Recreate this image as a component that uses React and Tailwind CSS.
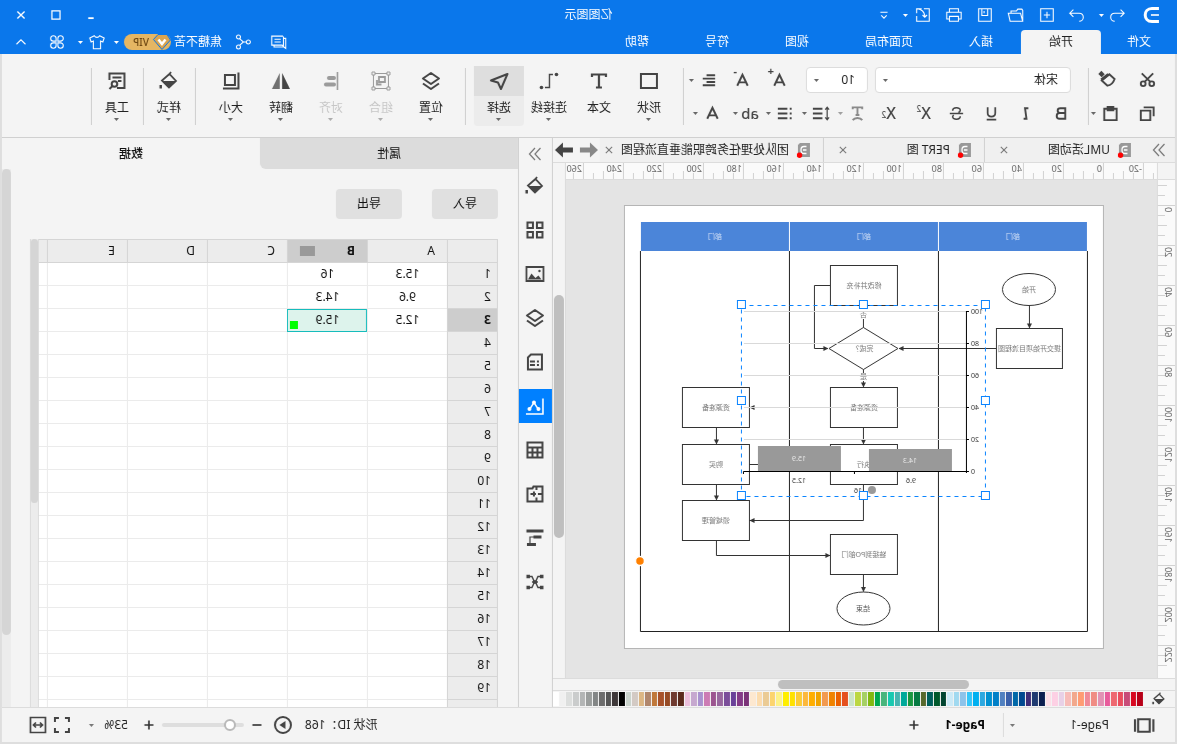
import React, { useState } from "react";
import clsx from "clsx";

const menuTabs = ["文件", "开始", "插入", "页面布局", "视图", "符号", "帮助"];

const palette = [
  "#b80018", "#d80820", "#c84c78", "#e94e5e", "#ee6870", "#e85c9c", "#e292b4", "#f08c84", "#f08a98", "#ff9c74",
  "#f2a88c", "#f7bcb8", "#e8d0e6", "#fdd0e4", "#fddfe8", "#0c1f50", "#1f3a70", "#3e2c78", "#004890", "#0068a8",
  "#3a60aa", "#5080c0", "#0080c8", "#0090d0", "#2ca8e0", "#00b0f0", "#34c6f9", "#8cc3ea", "#a0d9f0", "#cceaf7",
  "#004430", "#00582c", "#005f5c", "#57682c", "#067a42", "#1a9840", "#00a99a", "#45b5b0", "#18c9b0", "#48b57c",
  "#00a850", "#82b811", "#a5d064", "#bcd742", "#cce5c8", "#e5501e", "#eb6100", "#f08300", "#f29a50", "#f0a400",
  "#ffae00", "#fcb83c", "#fccc34", "#ffe100", "#ffee00", "#fdf288", "#fcd46e", "#ebcb94", "#fcdcae", "#fde8d0",
  "#7a3278", "#843b88", "#6a4199", "#7b4e9a", "#99689f", "#9c5590", "#cc7bb4", "#a992cf", "#c6a8cf", "#ecc0dc",
  "#5a2a1c", "#6f3a2f", "#964a24", "#a8522a", "#c0783a", "#b0866c", "#dcb684", "#d3cac4", "#c9d2cb", "#000000",
  "#3d3738", "#555555", "#6c6c6c", "#838686", "#9b9e9d", "#b3b5b5", "#cacccc", "#dcdedd", "#f0f0f0", "#ffffff",
];

const cells = {
  1: ["15.3", "16"],
  2: ["9.6", "14.3"],
  3: ["12.5", "15.9"],
};

// All icons share a 20x20 box and are stroked with the current colour
const icons = {
  undo: <path d="M6 4 2 8l4 4M2.500 8h10c3 0 4.500 2 4.500 4.500 0 2.500-2 4.500-4.500 4.500" />,
  redo: <path d="M14 4l4 4-4 4M17.500 8h-10C4.500 8 3 10 3 12.500 3 15 5 17 7.500 17" />,
  add: <path d="M3 3h14v14H3zM10 6.500v7M6.500 10h7" />,
  open: <path d="M2.500 16.500V5l1-1.500h4.500l1.500 2h6V8M2.500 17 5 8h13.500l-2 9z" />,
  save: <path d="M3 3h14v14H3zM7 3v7.500h6.500V3M11 5.500V8" />,
  print: <path d="M5 7V3h10v4M5 14.500H2V7h16v7.500h-3M5 11.500h10V17H5z" />,
  send: <path d="M9 3H3v14h14v-6M11.500 3H17v5M17 3c-6 .500-9 4-9 9.500M5.500 10 8 12.500l2.500-2.500" />,
  more: <path d="M6 7h8M7 10.500l3 3 3-3" />,
  chat: <path d="M5.500 3.500H18v10H6.500L5 15V4M5.500 6H2.500v11l2-1.500h11v-2M8 7h7M8 10h7" />,
  share: <><circle cx="4" cy="10" r="2.200" /><circle cx="15" cy="4.500" r="2.200" /><circle cx="15" cy="15.500" r="2.200" /><path d="M6 10h3.500M13.500 6.500 9.500 10l4 3.500" /></>,
  shirt: <path d="M7 3 2 5.500 3.500 10l2.500-1v8.500h8V9l2.500 1L18 5.500 13 3c-1.500 2.500-4.500 2.500-6 0z" />,
  clover: <path d="M9 9H6A3 3 0 1 1 9 6zM11 9h3A3 3 0 1 0 11 6zM9 11H6A3 3 0 1 0 9 14zM11 11h3a3 3 0 1 1-3 3z" />,
  up: <path d="M5 12.500l5-5 5 5" />,
  min: <path d="M7 13.500h6" strokeWidth="2" />,
  max: <path d="M5.500 5.500h9v9h-9z" strokeWidth="1.400" />,
  close: <path d="M6 6l8 8M14 6l-8 8" strokeWidth="1.500" />,
  tabClose: <path d="M6.500 6.500l7 7M13.500 6.500l-7 7" strokeWidth="1.200" />,
  cut: <><circle cx="5.500" cy="14.500" r="2.500" /><circle cx="14.500" cy="14.500" r="2.500" /><path d="M4 3.500l9 9M16 3.500l-9 9" /></>,
  copy: <path d="M7 7h10v10H7zM3.500 13V3.500H14" />,
  brush: <><path d="M18 2.500 14.500 6" strokeWidth="4.500" /><path d="M8 4.500l8 6.500-6 5.500c-3.500-.500-6-2.500-7.500-7z" /><path d="M9 4.500l7.500 6" strokeWidth="3" /></>,
  paste: <><path d="M7 5H3.500v12h13V5H13" /><path d="M7 3h6v3.500H7z" fill="currentColor" /></>,
  bold: <path d="M6 4.500h5c4 0 4 5 0 5H6zM6 9.500h6c4 0 4 6 0 6H6z" />,
  italic: <path d="M8 4.500h3.500l-1.500 11H13" />,
  underline: <path d="M6 3.500v6c0 5 8 5 8 0v-6M5 16.500h10" strokeWidth="1.800" />,
  strike: <path d="M14 7c0-4-8-4-8-.500 0 1.500 1 2 2 2.500M3 10h14M6 13c0 4 8 4 8 .500 0-1-.500-1.500-1-2" strokeWidth="1.600" />,
  textArc: <path d="M5 5.500v-2h10v2M10 3.500v8M8 11.500h4M5 17c2-3 8-3 10 0" />,
  spacing: <><path d="M9 5h10M9 10h10M9 15h10" strokeWidth="2" /><path d="M4 4v12M2 6l2-2.500L6 6M2 14l2 2.500L6 14" strokeWidth="1.300" /></>,
  bullets: <path d="M8 5h10M8 10h10M8 15h10M3.500 5h2M3.500 10h2M3.500 15h2" />,
  align: <path d="M3 4.500h9M3 8h13M3 11.500h9M3 15h13" />,
  fontColor: <path d="M4.500 15.500 10 4l5.500 11.500M6.500 12h7" />,
  rect: <path d="M2 3h16v14H2z" />,
  text: <path d="M3 6V3.500h14V6M10 3.500v13M7 16.500h6" strokeWidth="2.200" />,
  connector: <><circle cx="2.500" cy="3.500" r="1.800" fill="currentColor" stroke="none" /><circle cx="17.500" cy="16.500" r="1.800" fill="currentColor" stroke="none" /><path d="M6 3.500h3.500v13H14" strokeWidth="1.400" /></>,
  select: <path d="M1.500 3 18 9.500l-7 2L8 18z" strokeLinejoin="round" />,
  layers: <path d="M10 2l8 5.500-8 5.500-8-5.500zM2 12.500l8 5.500 8-5.500" strokeLinejoin="round" />,
  group: <><path d="M2.500 2.500h15v15h-15z" strokeWidth="1" /><path d="M6 6h6v5H6zM9.500 13.500H14V9" strokeWidth="1.800" /><path d="M1 1h3v3H1zM16 1h3v3h-3zM1 16h3v3H1zM16 16h3v3h-3z" fill="#f4f4f4" strokeWidth="1" /></>,
  alignTo: <><path d="M3.500 1v18" strokeWidth="1.600" /><path d="M7 7h5M7 13.500h8" strokeWidth="4" strokeLinecap="round" /></>,
  flip: <><path d="M8.800 2v16H1z" fill="currentColor" stroke="none" /><path d="M11.200 2v16H19z" fill="currentColor" stroke="none" opacity=".75" /></>,
  size: <path d="M6 4h10v10H6zM2.500 1.500v16H18" />,
  bucket: <><path d="M9.500 3 17 9.500l-7 7L3 10zM10 4 8 1" strokeWidth="1.800" /><path d="M3 10h14l-7 7z" fill="currentColor" stroke="none" /><path d="M17 14h2.500v3.500H17z" fill="currentColor" stroke="none" /></>,
  tool: <><path d="M10 17H2.500V2.500h15V9M5.500 6.500h9M5.500 10H9" /><circle cx="12.500" cy="13" r="2.800" /><path d="M14.500 15l3 3" /></>,
  chevrons: <path d="M4.500 4l5.500 6-5.500 6M10 4l5.500 6-5.500 6" strokeWidth="1.200" />,
  grid: <path d="M2.500 2.500h5.500v5.500H2.500zM12 2.500h5.500v5.500H12zM2.500 12h5.500v5.500H2.500zM12 12h5.500v5.500H12z" />,
  image: <><path d="M1.500 3h17v14h-17z" strokeWidth="1.800" /><path d="M3.500 15.500l3-4 3 2.500 4-4.500 3.500 6z" fill="currentColor" stroke="none" /><circle cx="5.500" cy="7" r="1.200" fill="currentColor" stroke="none" /></>,
  page: <path d="M3 2.500h11l3 3v12H3zM6 9.500h2M10 9.500h5M6 13h2M10 13h5" />,
  chart: <><path d="M2 2.500V18h17" strokeWidth="1.600" /><path d="M6.500 13.500 11 6.500l4.500 7" strokeWidth="1.400" /><circle cx="6.500" cy="13" r="2" fill="currentColor" stroke="none" /><circle cx="11" cy="6.500" r="2" fill="currentColor" stroke="none" /><circle cx="15.500" cy="13" r="2" fill="currentColor" stroke="none" /></>,
  table: <path d="M2.500 2.500h15v15h-15zM2.500 7.500h15M2.500 12.500h15M7.500 7.500v10M12.500 7.500v10" />,
  plan: <path d="M2.500 2.500h9l1 2h5v13h-15zM2.500 10H7M8.500 2.500V6M8.500 13.500v4M11 7.500v5M9 10h5.500" />,
  gantt: <><path d="M1.500 3h17" strokeWidth="3" /><path d="M3.500 9h8M9 16.500h9" strokeWidth="3" /><path d="M11 9h4v7" strokeWidth="1.200" /></>,
  mind: <><path d="M4 4.500h3l2.500 5.500L7 15.500H4M16 4.500h-3L10.500 10l2.500 5.500h3M7 10h6" strokeWidth="1.400" /><path d="M1.500 4.500H5M1.500 15.500H5M15 4.500h3.500M15 15.500h3.500M8 10h4" strokeWidth="3.600" /></>,
  book: <path d="M5 4h11v12H5zM1.500 4v12M19 4v12" strokeWidth="2" />,
  plus: <path d="M10 5v10M5 10h10" strokeWidth="1.800" />,
  minus: <path d="M5 10h10" strokeWidth="1.800" />,
  play: <><circle cx="10" cy="10" r="8" /><path d="M7.500 6l6 4-6 4z" fill="currentColor" stroke="none" /></>,
  full: <path d="M7 3H3v4M13 3h4v4M7 17H3v-4M13 17h4v-4" />,
  fit: <path d="M2.500 2.500h15v15h-15zM6 10h8M8 7.500 5.500 10 8 12.500M12 7.500l2.500 2.500-2.500 2.500" strokeWidth="1.700" />,
};

function Icon({ name, size = 18, width = 2, className = "" }) {
  return (
    <svg width={size} height={size} viewBox="0 0 20 20" fill="none" stroke="currentColor" strokeWidth={width} className={clsx("shrink-0", className)} aria-hidden="true">
      {icons[name]}
    </svg>
  );
}

function Caret({ className = "" }) {
  return (
    <svg width="5" height="3" viewBox="0 0 5 3" className={clsx("shrink-0", className)} aria-hidden="true">
      <path d="M0 0h5L2.500 3z" fill="currentColor" />
    </svg>
  );
}

function TopButton({ name, label, className }) {
  return (
    <button aria-label={label} className={clsx("flex h-6 items-center justify-center", className)}>
      <Icon name={name} size={18} width={1.2} />
    </button>
  );
}

function TitleBar({ tab, setTab }) {
  return (
    <header className="shrink-0 bg-[#0a77eb] text-white">
      <div className="relative flex h-[28px] items-center pt-0.5">
        <svg width="16" height="16" viewBox="0 0 16 16" className="ml-[18px]" fill="none" stroke="#fff" aria-hidden="true">
          <path d="M0 1.500h7c9 0 9 13 0 13H0" strokeWidth="3" />
          <path d="M0 8h8" strokeWidth="2" opacity=".8" />
        </svg>
        <TopButton name="undo" label="撤销" className="ml-4 w-5" />
        <Caret className="ml-[3px]" />
        <TopButton name="redo" label="恢复" className="ml-3 w-5" />
        <TopButton name="add" label="新建" className="ml-[9px] w-[22px]" />
        <TopButton name="open" label="打开" className="ml-[9px] w-[22px]" />
        <TopButton name="save" label="保存" className="ml-[9px] w-[22px]" />
        <TopButton name="print" label="打印" className="ml-[9px] w-[22px]" />
        <TopButton name="send" label="导出" className="ml-[9px] w-[22px]" />
        <Caret className="ml-1" />
        <TopButton name="more" label="更多" className="ml-[9px] w-5" />
        <span className="absolute left-1/2 -translate-x-1/2 text-xs leading-4">亿图图示</span>
        <div className="mr-[11px] ml-auto flex gap-[15px]">
          <TopButton name="min" label="最小化" className="w-5" />
          <TopButton name="max" label="最大化" className="w-5" />
          <TopButton name="close" label="关闭" className="w-5" />
        </div>
      </div>

      <div className="flex h-[26px] items-end">
        <nav className="flex text-xs leading-4">
          {menuTabs.map((t, i) => (
            <button
              key={t}
              onClick={() => setTab(t)}
              className={clsx(
                "h-6 rounded-t-sm",
                i === 0 ? "w-[76px]" : "px-7",
                tab === t && "bg-[#f4f4f4] text-[#222]"
              )}
            >
              {t}
            </button>
          ))}
        </nav>
        <div className="mr-[11px] ml-auto flex items-center">
          <TopButton name="chat" label="消息" className="w-5" />
          <TopButton name="share" label="分享" className="ml-4 w-5" />
          <span className="ml-[11px] text-xs leading-4">焦糖不苦</span>
          <span className="ml-[3px] flex h-4 w-[47px] items-center rounded-full bg-[#e5b663] text-[#6d4712]">
            <svg width="18" height="16" viewBox="0 0 18 16" aria-hidden="true">
              <path d="M4 .5h9l4.500 5L9 15.500.5 6z" fill="#dca44c" stroke="#0a77eb" />
              <path d="M5.500 5.500 9 10l3.500-4.500" fill="none" stroke="#fff" strokeWidth="2.500" />
            </svg>
            <b className="pl-1 text-[10px] leading-4 font-medium">VIP</b>
          </span>
          <Caret className="ml-[5px]" />
          <TopButton name="shirt" label="皮肤" className="ml-[7px] w-5" />
          <Caret className="ml-1" />
          <TopButton name="clover" label="应用" className="ml-[11px] w-5" />
          <TopButton name="up" label="收起功能区" className="ml-4 w-5" />
        </div>
      </div>
    </header>
  );
}

function Divider() {
  return <div className="h-[57px] w-px shrink-0 self-center bg-[#cfcfcf]" />;
}

function BigButton({ name, label, caret = true, active, disabled, size = 20 }) {
  return (
    <button
      disabled={disabled}
      className={clsx(
        "flex h-[60px] w-[50px] shrink-0 flex-col items-center rounded-sm text-[#444]",
        active && "bg-[#ececec]",
        disabled && "opacity-50"
      )}
    >
      <span className={clsx("flex h-[30px] w-full items-center justify-center", active && "bg-[#dedede]")}>
        <Icon name={name} size={size} />
      </span>
      <span className={clsx("mt-1 text-xs leading-4", disabled ? "text-[#999]" : "text-[#222]")}>{label}</span>
      {caret && <Caret className="mt-0.5 text-[#666]" />}
    </button>
  );
}

function SmallButton({ name, label, caret, className }) {
  return (
    <button aria-label={label} className={clsx("flex h-6 shrink-0 items-center", className)}>
      <Icon name={name} size={19} />
      {caret && <Caret className="ml-[5px] text-[#666]" />}
    </button>
  );
}

function Ribbon() {
  return (
    <div className="flex h-[84px] shrink-0 items-center border-b border-[#d0d0d0] bg-[#f4f4f4] pt-px text-[#444]">
      <div className="ml-[18px] flex w-[68px] flex-col gap-[10px]">
        <div className="flex">
          <SmallButton name="cut" label="剪切" className="w-10" />
          <SmallButton name="brush" label="格式刷" />
        </div>
        <div className="flex">
          <SmallButton name="copy" label="复制" className="w-[37px]" />
          <SmallButton name="paste" label="粘贴" caret />
        </div>
      </div>
      <Divider />

      <div className="ml-[17px] flex w-[387px] flex-col gap-2">
        <div className="flex items-center">
          <label className="relative flex items-center">
            <select aria-label="字体" className="h-[26px] w-[196px] appearance-none rounded-sm border border-[#dcdcdc] bg-white pl-3 text-xs text-[#222]">
              <option>宋体</option>
            </select>
            <Caret className="pointer-events-none absolute right-2 text-[#666]" />
          </label>
          <label className="relative ml-[7px] flex items-center">
            <select aria-label="字号" className="h-[26px] w-[62px] appearance-none rounded-sm border border-[#dcdcdc] bg-white pl-3 text-xs text-[#222]">
              <option>10</option>
            </select>
            <Caret className="pointer-events-none absolute right-2 text-[#666]" />
          </label>
          <button aria-label="增大字号" className="ml-[17px] flex w-5">
            <Icon name="fontColor" size={19} />
            <sup className="-ml-1 text-[11px] leading-3 font-bold">+</sup>
          </button>
          <button aria-label="减小字号" className="ml-[17px] flex w-5">
            <Icon name="fontColor" size={19} />
            <sup className="-ml-1 text-[11px] leading-3 font-bold">-</sup>
          </button>
          <SmallButton name="align" label="对齐方式" caret className="ml-[14px]" />
        </div>
        <div className="flex items-center">
          <SmallButton name="bold" label="加粗" className="w-[35px]" />
          <SmallButton name="italic" label="斜体" className="w-[35px]" />
          <SmallButton name="underline" label="下划线" className="w-[35px]" />
          <SmallButton name="strike" label="删除线" className="w-[35px]" />
          <button className="flex h-6 w-[35px] items-center text-base leading-6 font-medium">X<sup className="text-[8px]">2</sup></button>
          <button className="flex h-6 w-[29px] items-center text-base leading-6 font-medium">X<sub className="text-[8px]">2</sub></button>
          <SmallButton name="textArc" label="文本弧度" caret className="w-[36px] opacity-60" />
          <SmallButton name="spacing" label="行距" caret className="w-[36px]" />
          <SmallButton name="bullets" label="项目符号" caret className="w-[36px]" />
          <button aria-label="大小写" className="flex h-6 w-[37px] items-center text-[15px] leading-6 font-medium">
            ab
            <Caret className="ml-[3px] text-[#666]" />
          </button>
          <SmallButton name="fontColor" label="字体颜色" caret />
        </div>
      </div>
      <Divider />

      <div className="ml-[9px] flex">
        <BigButton name="rect" label="形状" />
        <BigButton name="text" label="文本" caret={false} />
        <BigButton name="connector" label="连接线" />
        <BigButton name="select" label="选择" active />
      </div>
      <div className="ml-2 flex"><Divider /></div>
      <div className="mr-[10px] ml-[9px] flex">
        <BigButton name="layers" label="位置" />
        <BigButton name="group" label="组合" disabled />
        <BigButton name="alignTo" label="对齐" disabled />
        <BigButton name="flip" label="翻转" />
        <BigButton name="size" label="大小" />
      </div>
      <Divider />
      <div className="pl-px"><BigButton name="bucket" label="样式" /></div>
      <Divider />
      <div className="pl-px"><BigButton name="tool" label="工具" /></div>
      <Divider />
    </div>
  );
}

function DocTab({ label, className }) {
  return (
    <div className={clsx("flex items-center border-r border-[#d0d0d0]", className)}>
      <svg width="13" height="15" viewBox="0 0 13 15" className="shrink-0" aria-hidden="true">
        <path d="M0 0h10l2 2v12H0z" fill="#999" />
        <path d="M3.500 3.500h2.500c4 0 4 7 0 7H3.500M3.500 7H7" fill="none" stroke="#fff" strokeWidth="1.300" />
        <circle cx="10.500" cy="12.300" r="2.700" fill="#f00" />
      </svg>
      <a href="#doc" className="ml-2 whitespace-nowrap text-xs leading-4 text-[#222]">{label}</a>
      <button aria-label="关闭标签" className="mr-[10px] ml-auto text-[#777]">
        <Icon name="tabClose" size={18} />
      </button>
    </div>
  );
}

function DocTabs() {
  return (
    <div className="flex h-[25px] shrink-0 border-b border-[#dcdcdc] bg-[#f0f0f0]">
      <button aria-label="展开符号库" className="flex w-8 items-center justify-center text-[#777]">
        <Icon name="chevrons" size={20} />
      </button>
      <DocTab label="UML活动图" className="w-[159px] pl-3" />
      <DocTab label="PERT 图" className="w-[161px] pl-[13px]" />
      <DocTab label="团队处理任务跨职能垂直流程图" className="min-w-0 flex-1 border-r-0 pl-[13px] [&>button]:mr-0" />
      <div className="flex w-[47px] items-center justify-between bg-[#f4f4f4] px-0.5">
        <button aria-label="上一个标签">
          <svg width="19" height="16" viewBox="0 0 19 16"><path d="M0 8l8-7.500V5.500h10v5H8v5z" fill="#888" /></svg>
        </button>
        <button aria-label="下一个标签">
          <svg width="19" height="16" viewBox="0 0 19 16"><path d="M19 8l-8-7.500V5.500H1v5h10v5z" fill="#444" /></svg>
        </button>
      </div>
    </div>
  );
}

const hTicks = Array.from({ length: 59 }, (_, i) => i - 5);
const vTicks = Array.from({ length: 49 }, (_, i) => i - 2);

function HRuler() {
  return (
    <svg width="100%" height="16" className="min-w-0 flex-1 bg-[#fafafa] text-[9px]" aria-hidden="true">
      {hTicks.map((t) => (
        <g key={t}>
          <path d={`M${53.5 + t * 10} ${t % 4 === 0 ? 0 : t % 2 === 0 ? 8 : 10}V16`} stroke="#d2d2d2" />
          {t % 4 === 0 && <text x={55 + t * 10} y="9" fill="#666">{t * 5}</text>}
        </g>
      ))}
    </svg>
  );
}

function VRuler() {
  return (
    <svg width="18" className="h-full shrink-0 border-r border-[#dcdcdc] bg-[#fafafa] text-[9px]" aria-hidden="true">
      {vTicks.map((t) => (
        <g key={t}>
          <path d={`M${t % 4 === 0 ? 0 : t % 2 === 0 ? 8 : 10} ${25.5 + t * 10}H18`} stroke="#d2d2d2" />
          {t % 4 === 0 && (
            <text transform={`translate(10 ${27 + t * 10}) rotate(-90)`} textAnchor="end" fill="#666">{t * 5}</text>
          )}
        </g>
      ))}
    </svg>
  );
}

function Node({ x, y, text, w = 67, h = 40 }) {
  return (
    <g>
      <rect x={x + 0.5} y={y + 0.5} width={w} height={h} fill="#fff" stroke="#333" />
      <text x={x + w / 2 + 0.5} y={y + h / 2 + 3} textAnchor="middle" fill="#777">{text}</text>
    </g>
  );
}

const handles = [
  [119, 99], [241, 99], [363, 99],
  [119, 195], [363, 195],
  [119, 290], [241, 290], [363, 290],
];

function Diagram() {
  return (
    <svg width="478" height="442" viewBox="1 0 478 442" className="text-[7px]" role="img" aria-label="跨职能垂直流程图">
      <defs>
        <marker id="arrow" viewBox="0 0 6 6" refX="5.500" refY="3" markerWidth="5" markerHeight="5" orient="auto">
          <path d="M0 0l6 3-6 3z" fill="#333" />
        </marker>
      </defs>

      {/* lanes */}
      {[17, 166, 315].map((x) => (
        <g key={x}>
          <rect x={x} y="16" width="148" height="29" fill="#4b85d9" />
          <text x={x + 74} y="33" textAnchor="middle" fill="#d5e3f8">部门</text>
        </g>
      ))}
      <path d="M16.500 45v380.500h447V45M165.500 45v380M314.500 45v380" fill="none" stroke="#222" />

      {/* connectors */}
      <g fill="none" stroke="#333">
        <path d="M74.500 99v23" markerEnd="url(#arrow)" />
        <path d="M108 142.500h97" markerEnd="url(#arrow)" />
        <path d="M240.500 113v9" />
        <path d="M274 79.500h15.500v63H276" markerEnd="url(#arrow)" />
        <path d="M240.500 163v4" />
        <path d="M240.500 175v6" markerEnd="url(#arrow)" />
        <path d="M350 201.500h4" markerEnd="url(#arrow)" />
        <path d="M240.500 222v16" markerEnd="url(#arrow)" />
        <path d="M387.500 222v16" markerEnd="url(#arrow)" />
        <path d="M387.500 279v15" markerEnd="url(#arrow)" />
        <path d="M354 258.500h-80" />
        <path d="M240.500 279v35.500H354" markerEnd="url(#arrow)" />
        <path d="M387.500 335v14.500H274" markerEnd="url(#arrow)" />
        <path d="M240.500 369v16.500" markerEnd="url(#arrow)" />
      </g>

      <ellipse cx="75" cy="83.500" rx="26.500" ry="16" fill="#fff" stroke="#333" />
      <text x="75" y="86" textAnchor="middle" fill="#777">开始</text>
      <Node x={41} y={122} w={66} text="提交开始项目流程图" />
      <Node x={206} y={59} text="修改并补充" />
      <path d="M240.500 121.500l34.500 21-34.500 21-34.500-21z" fill="#fff" stroke="#333" />
      <text x="241" y="145" textAnchor="middle" fill="#777">完成？</text>
      <text x="240.500" y="111" textAnchor="middle" fill="#777">否</text>
      <text x="240.500" y="173" textAnchor="middle" fill="#777">是</text>
      <Node x={206} y={181} text="资源准备" />
      <Node x={206} y={238} text="执行" />
      <Node x={354} y={181} text="资源准备" />
      <Node x={354} y={238} text="购买" />
      <Node x={354} y={294} text="领域管理" />
      <Node x={206} y={328} text="链接到PO部门" />
      <ellipse cx="240.500" cy="402.500" rx="26.500" ry="16.500" fill="#fff" stroke="#333" />
      <text x="241" y="405" textAnchor="middle" fill="#555">结束</text>

      {/* bar chart */}
      {[100, 80, 60, 40, 20, 0].map((v, i) => (
        <g key={v}>
          {v > 0 && <path d={`M137 ${105.5 + i * 32}h223`} stroke="#d9d9d9" />}
          <path d={`M135 ${105.5 + i * 32}h3`} stroke="#000" />
          <text x="133" y={108 + i * 32} textAnchor="end" fill="#333">{v}</text>
        </g>
      ))}
      <path d="M137.500 106v161M135 265.500h225.500v2.500M249.500 266v2" fill="none" stroke="#000" />
      <rect x="152" y="243" width="83" height="22" fill="#999" />
      <rect x="263" y="240" width="83" height="25" fill="#999" />
      <text x="194" y="257" textAnchor="middle" fill="#eee">14.3</text>
      <text x="305" y="255" textAnchor="middle" fill="#eee">15.9</text>
      <text x="193" y="277" textAnchor="middle" fill="#333">9.6</text>
      <text x="305" y="277" textAnchor="middle" fill="#333">12.5</text>
      <circle cx="232" cy="284" r="4" fill="#999" />
      <text x="242" y="287" fill="#333">16</text>

      {/* selection */}
      <rect x="118.500" y="99.500" width="244" height="191" fill="none" stroke="#0a84ff" strokeDasharray="4 4" />
      {handles.map(([x, y]) => (
        <rect key={`${x}-${y}`} x={x - 4.5} y={y - 4.5} width="8" height="8" fill="#fff" stroke="#0a84ff" />
      ))}
      <circle cx="464" cy="355" r="4.500" fill="#ff8000" stroke="#fff" strokeWidth="1.500" />
    </svg>
  );
}

function CanvasArea() {
  return (
    <main className="flex min-w-0 flex-1 flex-col">
      <DocTabs />
      <div className="flex min-h-0 flex-1">
        <div className="flex min-w-0 flex-1 flex-col">
          <div className="flex h-[17px] shrink-0 border-b border-[#dcdcdc]">
            <div className="w-[18px] shrink-0 border-r border-[#dcdcdc] bg-[#f4f4f4]" />
            <HRuler />
          </div>
          <div className="flex min-h-0 flex-1">
            <VRuler />
            <div className="min-w-0 flex-1 overflow-hidden bg-[#e4e4e4] pt-[25px] pl-[53px]">
              <div className="w-fit border border-[#b5b5b5] bg-white [&>svg]:block">
                <Diagram />
              </div>
            </div>
          </div>
        </div>
        <div className="w-[13px] shrink-0 border-l border-[#dcdcdc] bg-[#f4f4f4] pt-[132px]">
          <div className="mx-px h-[243px] rounded-full bg-[#bfbfbf]" />
        </div>
      </div>
      <div className="flex h-[13px] shrink-0 items-center border-y border-[#dcdcdc] bg-[#f4f4f4] pl-[206px]">
        <div className="h-[9px] w-[191px] rounded-full bg-[#bfbfbf]" />
      </div>
      <div className="flex h-4 shrink-0 items-center bg-[#f4f4f4] pr-px text-[#444]">
        <button aria-label="填充颜色" className="flex w-8 justify-center">
          <Icon name="bucket" size={14} />
        </button>
        <div className="flex h-[14px] flex-1 gap-px">
          {palette.map((c) => (
            <button key={c} aria-label={c} className="min-w-0 flex-1" style={{ background: c }} />
          ))}
        </div>
      </div>
    </main>
  );
}

const sideIcons = ["bucket", "grid", "image", "layers", "page", "chart", "table", "plan", "gantt", "mind"];

function SideStrip() {
  return (
    <aside className="flex w-[35px] shrink-0 flex-col items-center border-x border-[#d0d0d0] bg-[#f4f4f4] text-[#444]">
      <button aria-label="收起面板" className="flex h-[31px] items-center text-[#777]">
        <Icon name="chevrons" size={20} />
      </button>
      <div className="flex w-full flex-col gap-[10px]">
        {sideIcons.map((n) => (
          <button key={n} aria-label={n} className={clsx("flex h-[34px] w-full items-center justify-center", n === "chart" && "bg-[#0080ff] text-white")}>
            <Icon name={n} size={20} />
          </button>
        ))}
      </div>
    </aside>
  );
}

function DataTable() {
  const rows = Array.from({ length: 20 }, (_, i) => i + 1);
  return (
    <table className="w-[459px] table-fixed border-collapse bg-white text-xs leading-4 text-[#111]">
      <thead>
        <tr className="h-[23px] bg-[#ececec]">
          <th className="w-[50px] border border-[#d5d5d5]" />
          {["A", "B", "C", "D", "E"].map((c) => (
            <th
              key={c}
              className={clsx("w-20 border border-[#d5d5d5] p-0 pl-3 text-left", c === "B" ? "bg-[#cdcdcd] font-bold" : "font-normal")}
            >
              <span className="flex items-center">
                {c}
                {c === "B" && <i className="ml-8 h-[10px] w-[15px] bg-[#999]" />}
              </span>
            </th>
          ))}
          <th className="border-y border-[#d5d5d5]" />
        </tr>
      </thead>
      <tbody>
        {rows.map((r) => (
          <tr key={r} className="h-[23px]">
            <th
              scope="row"
              className={clsx("border border-[#d5d5d5] p-0 pl-1.5 text-left", r === 3 ? "bg-[#cdcdcd] font-bold" : "bg-[#ececec] font-normal")}
            >
              {r < 20 && r}
            </th>
            {[0, 1, 2, 3, 4].map((c) => {
              const active = r === 3 && c === 1;
              return (
                <td
                  key={c}
                  className={clsx("border border-[#ebebeb] p-0 text-center", active && "relative bg-[#ddf3ec] outline -outline-offset-1 outline-[#16bcbc]")}
                >
                  {cells[r]?.[c]}
                  {active && <i className="absolute right-0.5 bottom-0.5 size-2 bg-[#00ff00]" />}
                </td>
              );
            })}
            <td className="border-y border-[#ebebeb]" />
          </tr>
        ))}
      </tbody>
    </table>
  );
}

function DataPanel() {
  return (
    <section className="flex w-[516px] shrink-0 flex-col bg-[#f4f4f4] text-xs leading-4 text-[#111]">
      <div className="flex h-[31px] shrink-0">
        <button className="flex-1 rounded-br-md bg-[#dcdcdc]">属性</button>
        <button className="flex-1 font-medium">数据</button>
      </div>
      <div className="flex min-h-0 flex-1">
        <div className="flex min-w-0 flex-1 flex-col pt-5 pl-5">
          <div className="flex gap-[30px]">
            <button className="h-[30px] w-[66px] rounded-sm bg-[#e0e0e0]">导入</button>
            <button className="h-[30px] w-[66px] rounded-sm bg-[#e0e0e0]">导出</button>
          </div>
          <div className="mt-5 flex min-h-0 flex-1 overflow-hidden">
            <DataTable />
            <div className="w-[9px] border-x border-[#dcdcdc] bg-[#ececec]">
              <div className="h-[264px] rounded-full bg-[#d5d5d5]" />
            </div>
          </div>
        </div>
        <div className="w-[9px] bg-[#ececec]">
          <div className="h-[466px] rounded-full bg-[#d5d5d5]" />
        </div>
      </div>
    </section>
  );
}

function StatusBar() {
  const [zoom, setZoom] = useState(12);
  return (
    <footer className="flex h-[35px] shrink-0 items-center border-t border-[#dcdcdc] bg-[#f4f4f4] text-xs leading-4 text-[#222]">
      <button aria-label="页面视图" className="ml-5 text-[#444]"><Icon name="book" size={21} width={2} /></button>
      <label className="relative ml-[25px] flex items-center">
        <select aria-label="页面" className="w-[99px] appearance-none bg-transparent">
          <option>Page-1</option>
        </select>
        <Caret className="pointer-events-none absolute right-0 text-[#777]" />
      </label>
      <div className="ml-[6px] h-6 w-px bg-[#dcdcdc]" />
      <a href="#page-1" className="ml-[18px] font-bold text-black">Page-1</a>
      <button aria-label="添加页面" className="ml-[22px] text-[#333]"><Icon name="plus" size={18} /></button>

      <span className="ml-auto">形状 ID：168</span>
      <button aria-label="播放" className="ml-3 text-[#444]"><Icon name="play" size={20} /></button>
      <button aria-label="缩小" className="ml-[7px] text-[#333]"><Icon name="minus" size={18} /></button>
      <input
        type="range"
        aria-label="缩放"
        value={zoom}
        onChange={(e) => setZoom(Number(e.target.value))}
        className="ml-1 h-1 w-[82px] appearance-none rounded-full bg-[#dedede] [&::-webkit-slider-thumb]:size-3 [&::-webkit-slider-thumb]:appearance-none [&::-webkit-slider-thumb]:rounded-full [&::-webkit-slider-thumb]:border-2 [&::-webkit-slider-thumb]:border-[#b8b8b8] [&::-webkit-slider-thumb]:bg-white"
      />
      <button aria-label="放大" className="ml-1 text-[#333]"><Icon name="plus" size={18} /></button>
      <span className="ml-3 w-[26px]">53%</span>
      <Caret className="ml-2 text-[#777]" />
      <button aria-label="全屏" className="ml-[17px] text-[#444]"><Icon name="full" size={20} /></button>
      <button aria-label="适应宽度" className="mr-[26px] ml-1 text-[#444]"><Icon name="fit" size={20} /></button>
    </footer>
  );
}

export default function App() {
  const [tab, setTab] = useState("开始");

  return (
    // The whole window is shown flipped left to right
    <div className="flex h-screen -scale-x-100 flex-col overflow-hidden font-['Noto_Sans','Noto_Sans_CJK_SC',sans-serif]">
      <TitleBar tab={tab} setTab={setTab} />
      <div className="flex min-h-0 flex-1 flex-col border-x-2 border-b-2 border-[#dedede]">
        <Ribbon />
        <div className="flex min-h-0 flex-1">
          <CanvasArea />
          <SideStrip />
          <DataPanel />
        </div>
        <StatusBar />
      </div>
    </div>
  );
}
